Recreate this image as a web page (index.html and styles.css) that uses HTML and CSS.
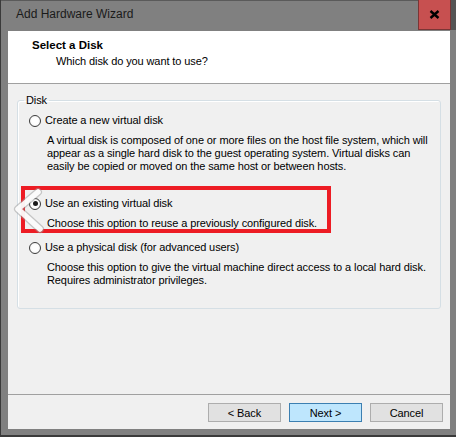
FILE: index.html
```
<!DOCTYPE html>
<html>
<head>
<meta charset="UTF-8">
<link rel="stylesheet" href="styles.css">
</head>
<body>
<div class="window">
	<div class="titlebar">
		<span class="title">Add Hardware Wizard</span>
		<button class="close">
			<svg width="11" height="9" viewBox="0 0 11 9"><path d="M1.5 1 L9.5 8 M9.5 1 L1.5 8" stroke="#000" stroke-width="2.4" fill="none"/></svg>
		</button>
		<span class="corner"></span>
	</div>
	<div class="client">
		<div class="header">
			<div class="header-title">Select a Disk</div>
			<div class="header-sub">Which disk do you want to use?</div>
		</div>
		<div class="main">
			<fieldset class="group">
				<legend>Disk</legend>
				<div class="option">
					<div class="choice"><span class="radio"></span>Create a new virtual disk</div>
					<p class="desc">A virtual disk is composed of one or more files on the host file system, which will<br>appear as a single hard disk to the guest operating system. Virtual disks can<br>easily be copied or moved on the same host or between hosts.</p>
				</div>
				<div class="option second">
					<div class="choice"><span class="radio checked"></span>Use an existing virtual disk</div>
					<p class="desc">Choose this option to reuse a previously configured disk.</p>
				</div>
				<div class="option third">
					<div class="choice"><span class="radio"></span>Use a physical disk (for advanced users)</div>
					<p class="desc">Choose this option to give the virtual machine direct access to a local hard disk.<br>Requires administrator privileges.</p>
				</div>
			</fieldset>
		</div>
		<div class="footer">
			<button class="btn">&lt; Back</button>
			<button class="btn default">Next &gt;</button>
			<button class="btn">Cancel</button>
		</div>
	</div>

	<!-- annotation over the dialog -->
	<div class="highlight"></div>
	<svg class="arrow" width="34" height="48" viewBox="0 0 34 48">
		<polyline points="26,5 6,22 28,42" fill="none" stroke="#9a9a9a" stroke-opacity="0.5" stroke-width="8" stroke-linecap="round" stroke-linejoin="round"/>
		<polyline points="26,5 6,22 28,42" fill="none" stroke="#ffffff" stroke-opacity="0.92" stroke-width="5.5" stroke-linecap="round" stroke-linejoin="round"/>
	</svg>
</div>
</body>
</html>
```

FILE: styles.css
```
* {
	box-sizing: border-box;
}

body {
	margin: 0;
	background: #808080;
	font-family: "Liberation Sans", Arial, sans-serif;
	font-size: 11px;
	letter-spacing: -0.1px;
	color: #000;
}

.window {
	position: relative;
	width: 456px;
	height: 437px;
	background: #808080;
	border-left: 1px solid #3a3a3a;
	border-bottom: 2px solid #3a3a3a;
	display: flex;
	flex-direction: column;
}

.titlebar {
	height: 31px;
	display: flex;
	align-items: flex-start;
	border-top: 1px solid #5a5a5a;
}

.title {
	flex: 1;
	padding: 6px 0 0 15px;
	font-size: 12px;
	letter-spacing: 0;
	color: #1a1a1a;
}

.close {
	width: 33px;
	height: 30px;
	margin-top: -1px;
	padding: 0;
	background: #c75050;
	border: 1px solid #7a3535;
	border-top: none;
	display: flex;
	align-items: center;
	justify-content: center;
}

.corner {
	width: 5px;
	height: 30px;
	margin-top: -1px;
	background: #555555;
}

.client {
	width: 442px;
	height: 398px;
	margin-left: 7px;
	background: #f0f0f0;
	display: flex;
	flex-direction: column;
}

.header {
	height: 53px;
	background: #ffffff;
	border-bottom: 1px solid #a0a0a0;
	padding: 7px 0 0 24px;
}

.header-title {
	font-weight: bold;
	font-size: 11.5px;
	letter-spacing: 0;
	line-height: 14px;
}

.header-sub {
	margin: 2px 0 0 24px;
	line-height: 14px;
}

.main {
	height: 310px;
	padding: 10px 9px 0 9px;
}

.group {
	margin: 0;
	padding: 7px 6px 21px 6px;
	border: 1px solid #d5dfe5;
	border-radius: 3px;
	box-shadow: inset 1px 1px 0 #ffffff;
}

.group legend {
	padding: 0 2px;
	line-height: 13px;
}

.option {
	line-height: 13px;
	white-space: nowrap;
}

.option.second {
	margin-top: 24px;
}

.option.third {
	margin-top: 11px;
}

.choice {
	display: flex;
	align-items: center;
}

.radio {
	width: 12px;
	height: 12px;
	margin: 0 4px 0 5px;
	border: 1px solid #3c3c3c;
	border-radius: 50%;
	background: radial-gradient(circle, #ffffff 40%, #ececec 100%);
	display: flex;
	align-items: center;
	justify-content: center;
}

.radio.checked::after {
	content: "";
	width: 5px;
	height: 5px;
	border-radius: 50%;
	background: #1a1a1a;
}

.desc {
	margin: 7px 0 0 23px;
}

.footer {
	flex: 1;
	border-top: 1px solid #a0a0a0;
	padding: 8px 7px 0 0;
	display: flex;
	justify-content: flex-end;
	gap: 8px;
}

.btn {
	width: 73px;
	height: 19px;
	padding: 0;
	font-family: "Liberation Sans", Arial, sans-serif;
	font-size: 11px;
	letter-spacing: -0.1px;
	color: #000;
	background: #e1e1e1;
	border: 1px solid #adadad;
}

.btn.default {
	background: #bee6fd;
	border-color: #3c7fb1;
}

.highlight {
	position: absolute;
	left: 20px;
	top: 186px;
	width: 310px;
	height: 47px;
	border: 4px solid #ed1c24;
}

.arrow {
	position: absolute;
	left: 11px;
	top: 187px;
}
```
